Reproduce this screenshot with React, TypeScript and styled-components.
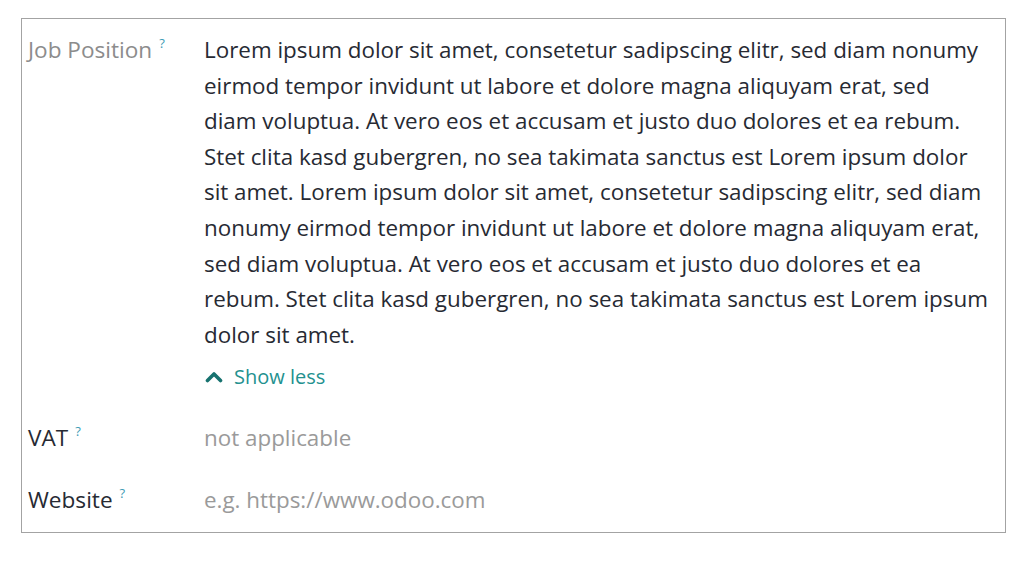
import React, { useState } from 'react';
import styled, { createGlobalStyle } from 'styled-components';

const GlobalStyle = createGlobalStyle`
  html, body {
    margin: 0;
    padding: 0;
    background: #ffffff;
  }
  body {
    font-family: 'Open Sans', 'Noto Sans', sans-serif;
  }
`;

const Page = styled.div`
  width: 1024px;
  height: 563px;
  padding: 18px 0 0 21px;
  box-sizing: border-box;
`;

const Card = styled.div`
  width: 985px;
  height: 515px;
  box-sizing: border-box;
  border: 1px solid #a3a3a3;
  padding: 13px 6px 0 6px;
  display: grid;
  grid-template-columns: 176px 1fr;
  align-content: start;
`;

const Label = styled.div<{ $muted?: boolean }>`
  font-size: 22.6px;
  line-height: 36px;
  color: ${(p) => (p.$muted ? '#8c8c8c' : '#272a33')};
  white-space: nowrap;
`;

const Help = styled.sup`
  font-size: 13px;
  color: #3e9bb5;
  margin-left: 7px;
  vertical-align: 10px;
  line-height: 0;
`;

const Value = styled.div<{ $placeholder?: boolean }>`
  font-size: 22.4px;
  line-height: 35.6px;
  color: ${(p) => (p.$placeholder ? '#9a9a9a' : '#272a33')};
`;

const Line = styled.span`
  display: block;
  white-space: nowrap;
`;

const Field = styled.div`
  display: contents;
`;

const Spacer = styled.div<{ $h: number }>`
  grid-column: 1 / span 2;
  height: ${(p) => p.$h}px;
`;

const ToggleButton = styled.button`
  display: flex;
  align-items: center;
  gap: 11px;
  margin-top: 10px;
  padding: 0 0 0 1px;
  background: none;
  border: 0;
  font-family: inherit;
  font-size: 20px;
  line-height: 30px;
  color: #23918f;
  cursor: pointer;
  svg {
    width: 18px;
    height: 12px;
    color: #17726f;
  }
`;

const lines = [
  'Lorem ipsum dolor sit amet, consetetur sadipscing elitr, sed diam nonumy',
  'eirmod tempor invidunt ut labore et dolore magna aliquyam erat, sed',
  'diam voluptua. At vero eos et accusam et justo duo dolores et ea rebum.',
  'Stet clita kasd gubergren, no sea takimata sanctus est Lorem ipsum dolor',
  'sit amet. Lorem ipsum dolor sit amet, consetetur sadipscing elitr, sed diam',
  'nonumy eirmod tempor invidunt ut labore et dolore magna aliquyam erat,',
  'sed diam voluptua. At vero eos et accusam et justo duo dolores et ea',
  'rebum. Stet clita kasd gubergren, no sea takimata sanctus est Lorem ipsum',
  'dolor sit amet.',
];

export default function App() {
  const [expanded, setExpanded] = useState(true);
  const shown = expanded ? lines : lines.slice(0, 2);

  return (
    <Page>
      <GlobalStyle />
      <Card>
        <Field>
          <Label $muted>
            Job Position<Help>?</Help>
          </Label>
          <div>
            <Value>
              {shown.map((line) => (
                <Line key={line}>{line}</Line>
              ))}
            </Value>
            <ToggleButton onClick={() => setExpanded(!expanded)}>
              <svg viewBox='0 0 18 12' fill='none' stroke='currentColor' strokeWidth='3.6' strokeLinecap='round' strokeLinejoin='round'>
                <path d={expanded ? 'M2.5 9.5L9 3l6.5 6.5' : 'M2.5 3L9 9.5 15.5 3'} />
              </svg>
              {expanded ? 'Show less' : 'Show more'}
            </ToggleButton>
          </div>
        </Field>
        <Spacer $h={28} />
        <Field>
          <Label>
            VAT<Help>?</Help>
          </Label>
          <Value $placeholder>not applicable</Value>
        </Field>
        <Spacer $h={26} />
        <Field>
          <Label>
            Website<Help>?</Help>
          </Label>
          <Value $placeholder>e.g. https://www.odoo.com</Value>
        </Field>
      </Card>
    </Page>
  );
}
